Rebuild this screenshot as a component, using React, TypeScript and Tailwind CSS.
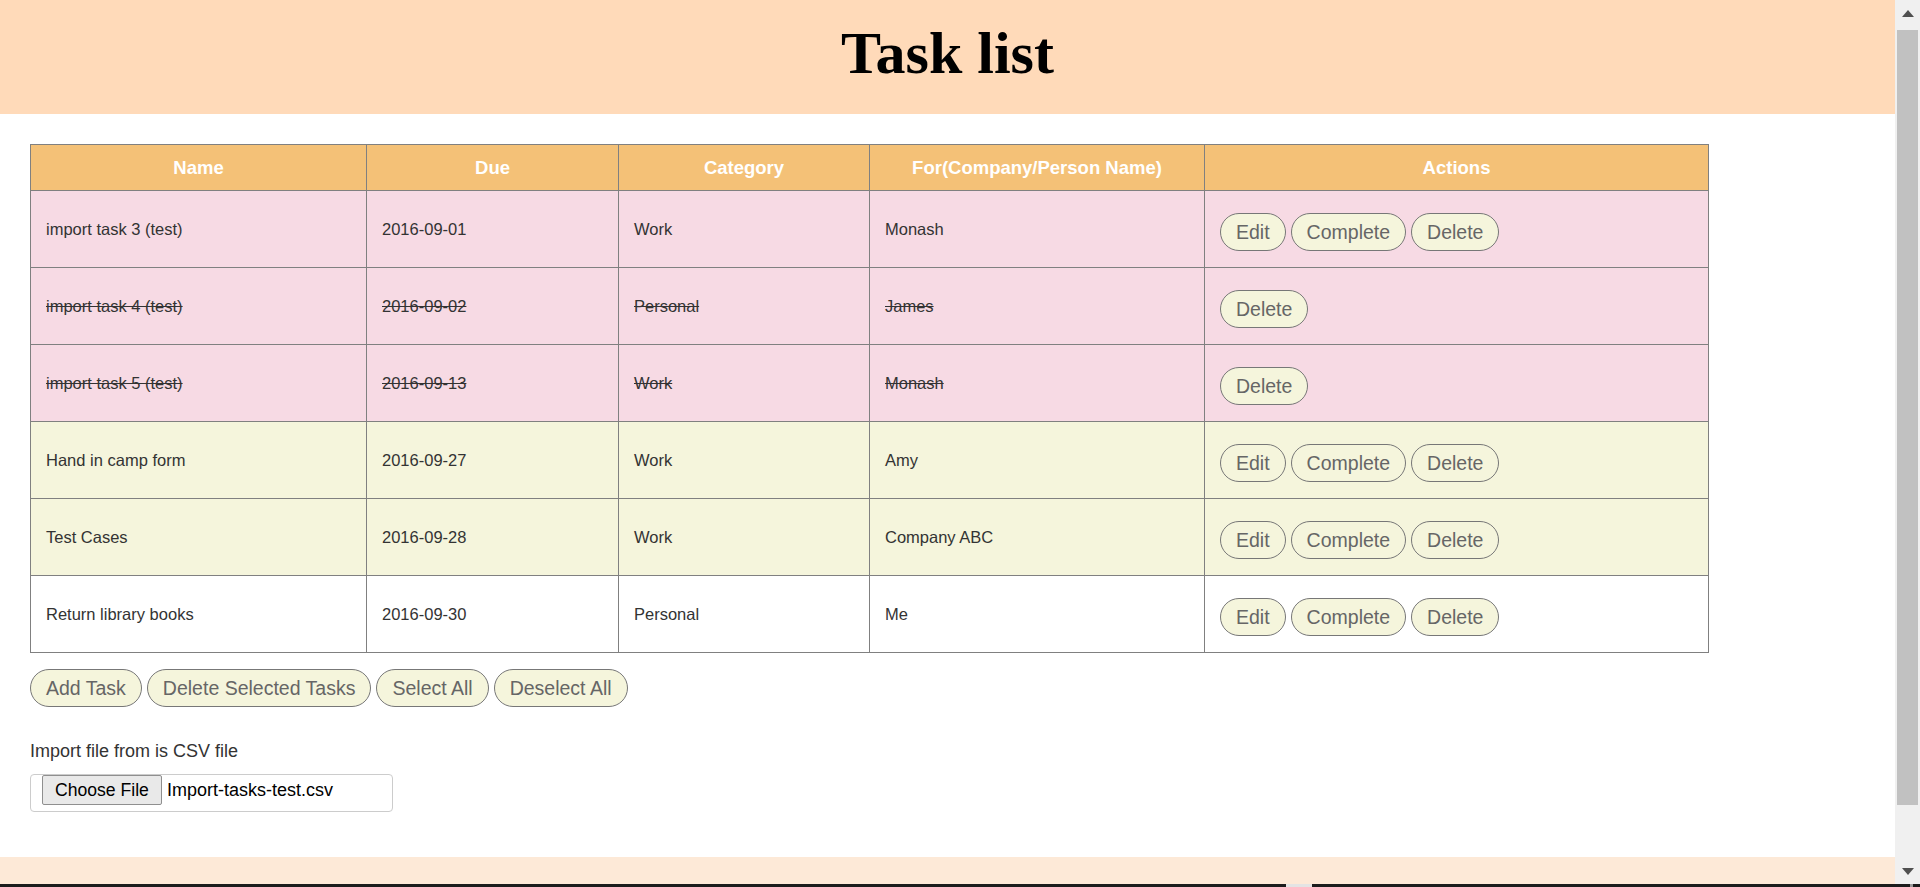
import React from "react";

type Row = {
  name: string;
  due: string;
  cat: string;
  who: string;
  tone: "pink" | "beige" | "white";
  done: boolean;
};

const rows: Row[] = [
  { name: "import task 3 (test)", due: "2016-09-01", cat: "Work", who: "Monash", tone: "pink", done: false },
  { name: "import task 4 (test)", due: "2016-09-02", cat: "Personal", who: "James", tone: "pink", done: true },
  { name: "import task 5 (test)", due: "2016-09-13", cat: "Work", who: "Monash", tone: "pink", done: true },
  { name: "Hand in camp form", due: "2016-09-27", cat: "Work", who: "Amy", tone: "beige", done: false },
  { name: "Test Cases", due: "2016-09-28", cat: "Work", who: "Company ABC", tone: "beige", done: false },
  { name: "Return library books", due: "2016-09-30", cat: "Personal", who: "Me", tone: "white", done: false },
];

function Pill({ children }: { children: React.ReactNode }) {
  return (
    <button
      type="button"
      className="rounded-[20px] border border-[#777777] bg-[#f5f5dc] px-[15px] py-[7px] text-[19.5px] leading-[22px] text-[#666666] whitespace-nowrap"
    >
      {children}
    </button>
  );
}

function Cell({ children, done }: { children: React.ReactNode; done: boolean }) {
  return (
    <td
      className={
        "border border-[#808080] px-[15px] align-middle text-[16.5px] text-[#333333] " +
        (done ? "line-through" : "")
      }
    >
      {children}
    </td>
  );
}

export default function App() {
  return (
    <div className="flex h-[887px] w-full flex-col overflow-hidden bg-white font-['Liberation_Sans',Arial,sans-serif]">
      <div className="flex min-h-0 flex-1">
        {/* main page */}
        <div className="flex min-w-0 flex-1 flex-col">
          <header className="h-[114px] bg-[#ffdab9] pt-[23px] text-center">
            <h1 className="font-['Liberation_Serif','Times_New_Roman',serif] text-[60px] font-bold leading-[60px] text-black">
              Task list
            </h1>
          </header>

          <main className="flex-1 pl-[30px] pt-[30px]">
            <table className="w-[1678px] table-fixed border-collapse">
              <colgroup>
                <col className="w-[336px]" />
                <col className="w-[252px]" />
                <col className="w-[251px]" />
                <col className="w-[335px]" />
                <col className="w-[504px]" />
              </colgroup>
              <thead>
                <tr className="h-[46px] bg-[#f4c177]">
                  {["Name", "Due", "Category", "For(Company/Person Name)", "Actions"].map((h) => (
                    <th
                      key={h}
                      className="border border-[#808080] px-[15px] text-center align-middle text-[18.5px] font-bold text-white"
                    >
                      {h}
                    </th>
                  ))}
                </tr>
              </thead>
              <tbody>
                {rows.map((r) => (
                  <tr
                    key={r.name}
                    className={
                      "h-[77px] " +
                      (r.tone === "pink" ? "bg-[#f7dae4]" : r.tone === "beige" ? "bg-[#f5f5dc]" : "bg-white")
                    }
                  >
                    <Cell done={r.done}>{r.name}</Cell>
                    <Cell done={r.done}>{r.due}</Cell>
                    <Cell done={r.done}>{r.cat}</Cell>
                    <Cell done={r.done}>{r.who}</Cell>
                    <td className="border border-[#808080] px-[15px] align-middle">
                      <div className="flex gap-[5px] pt-[5px]">
                        {!r.done && <Pill>Edit</Pill>}
                        {!r.done && <Pill>Complete</Pill>}
                        <Pill>Delete</Pill>
                      </div>
                    </td>
                  </tr>
                ))}
              </tbody>
            </table>

            <div className="mt-[16px] flex gap-[5px]">
              <Pill>Add Task</Pill>
              <Pill>Delete Selected Tasks</Pill>
              <Pill>Select All</Pill>
              <Pill>Deselect All</Pill>
            </div>

            <p className="mt-[34px] text-[18px] leading-[21px] text-[#333333]">Import file from is CSV file</p>

            <div className="mt-[12px] flex h-[38px] w-[363px] items-start rounded-[4px] border border-[#cccccc] pl-[11px]">
              <button
                type="button"
                className="h-[30px] rounded-[2px] border border-[#8f8f8f] bg-[#e9e9e9] px-[12px] text-[17.6px] leading-[28px] text-black"
              >
                Choose File
              </button>
              <span className="ml-[5px] text-[18px] leading-[30px] text-black">Import-tasks-test.csv</span>
            </div>
          </main>

          <footer className="h-[27px] bg-[#fde9d7]" />
        </div>

        {/* scrollbar */}
        <div className="flex w-[25px] flex-col bg-[#f0f0f0]">
          <div className="flex h-[26px] items-center justify-center">
            <svg width="12" height="7" viewBox="0 0 12 7">
              <polygon points="0,7 12,7 6,0" fill="#505050" />
            </svg>
          </div>
          <div className="mx-[2px] mt-[4px] h-[775px] bg-[#c1c1c1]" />
          <div className="mt-auto flex h-[26px] items-center justify-center">
            <svg width="12" height="7" viewBox="0 0 12 7">
              <polygon points="0,0 12,0 6,7" fill="#505050" />
            </svg>
          </div>
        </div>
      </div>

      {/* bottom strip */}
      <div className="flex h-[3px]">
        <div className="w-[1286px] bg-[#1c1c1c]" />
        <div className="w-[26px] bg-[#e4e4e4]" />
        <div className="w-[598px] bg-[#1c1c1c]" />
        <div className="w-[3px] bg-[#9a9a9a]" />
        <div className="flex-1 bg-[#1c1c1c]" />
      </div>
    </div>
  );
}
